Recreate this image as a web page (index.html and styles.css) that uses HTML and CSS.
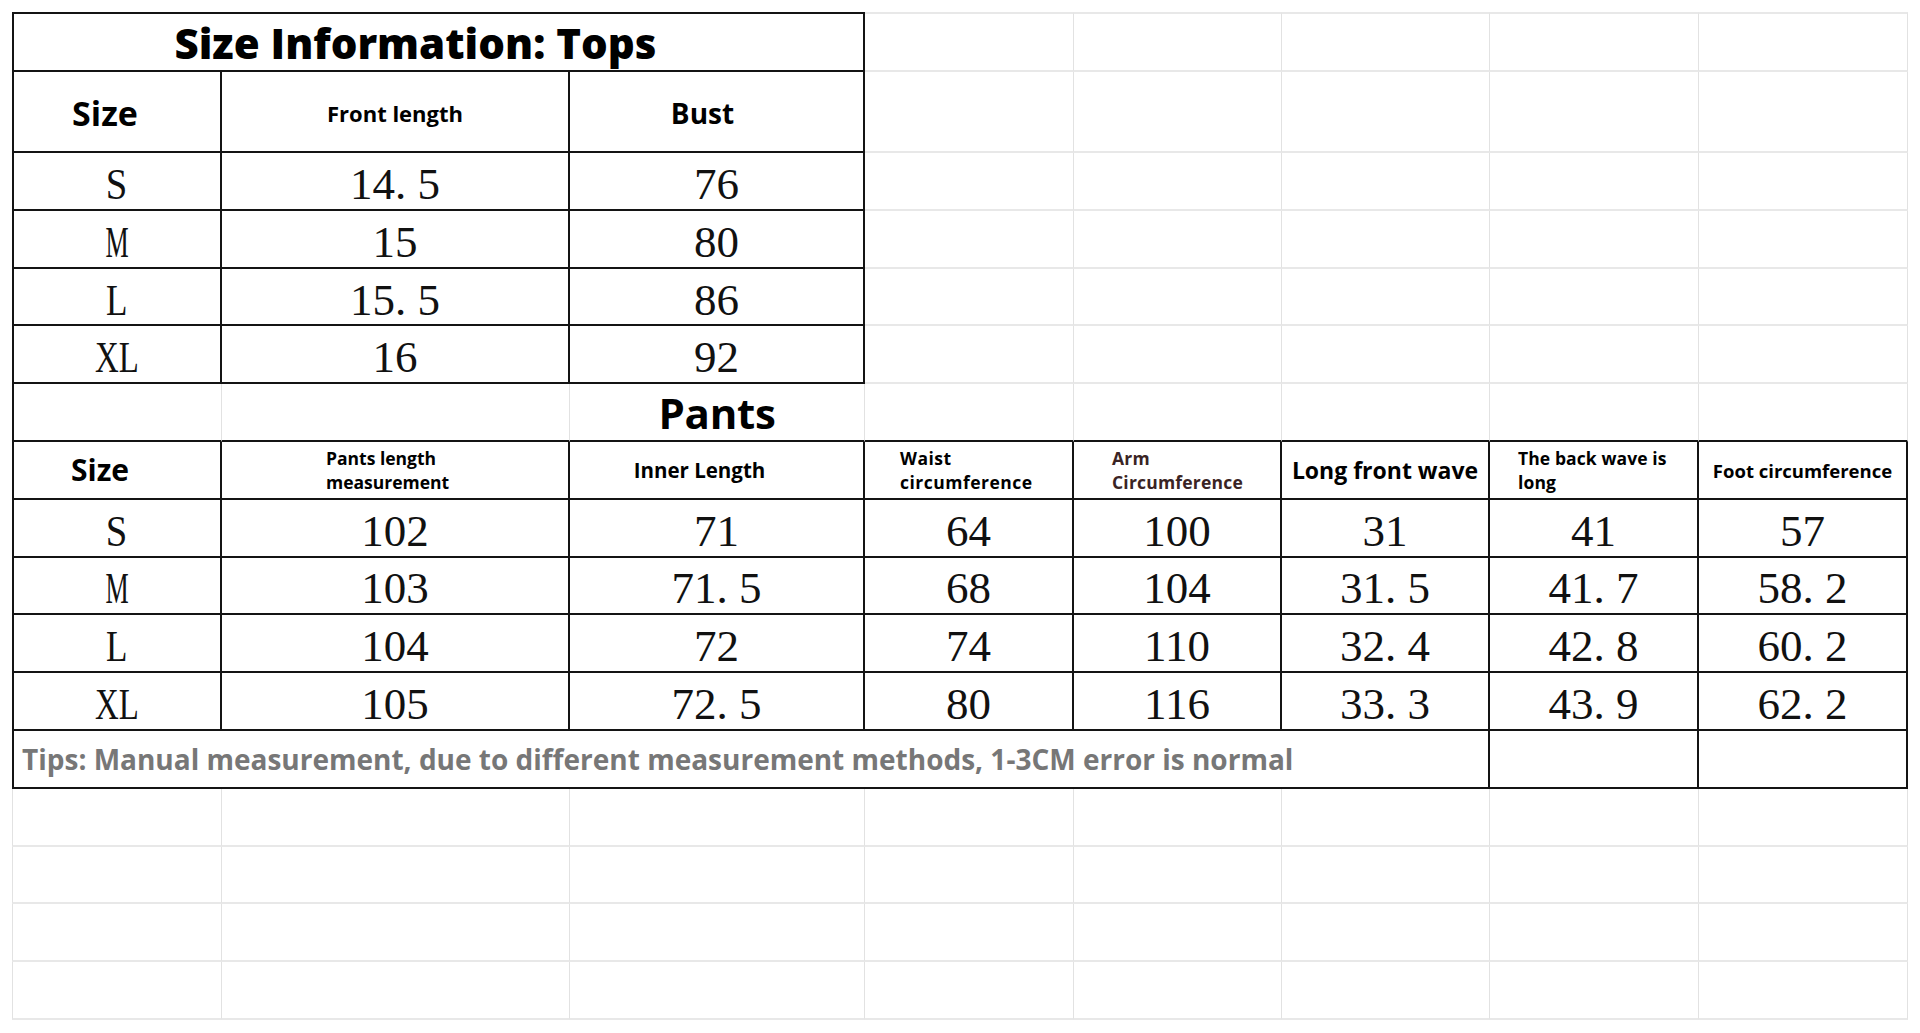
FILE: index.html
```html
<!DOCTYPE html>
<html lang="en">
<head>
<meta charset="utf-8">
<title>Size Information</title>
<link rel="stylesheet" href="styles.css">
</head>
<body>
<div class="sheet">
  <!-- row 0 -->
  <div class="cell k bl bt span3 title">Size Information: Tops</div>
  <div class="cell gt"></div><div class="cell gt"></div><div class="cell gt"></div><div class="cell gt"></div><div class="cell gt"></div>
  <!-- row 1 -->
  <div class="cell k bl hd hd-size">Size</div>
  <div class="cell k hd hd-front">Front length</div>
  <div class="cell k hd hd-bust">Bust</div>
  <div class="cell"></div><div class="cell"></div><div class="cell"></div><div class="cell"></div><div class="cell"></div>
  <!-- rows 2-5 -->
  <div class="cell k bl val"><span class="lt lt-s">S</span></div>
  <div class="cell k val">14. 5</div>
  <div class="cell k val">76</div>
  <div class="cell"></div><div class="cell"></div><div class="cell"></div><div class="cell"></div><div class="cell"></div>

  <div class="cell k bl val"><span class="lt lt-m">M</span></div>
  <div class="cell k val">15</div>
  <div class="cell k val">80</div>
  <div class="cell"></div><div class="cell"></div><div class="cell"></div><div class="cell"></div><div class="cell"></div>

  <div class="cell k bl val"><span class="lt lt-l">L</span></div>
  <div class="cell k val">15. 5</div>
  <div class="cell k val">86</div>
  <div class="cell"></div><div class="cell"></div><div class="cell"></div><div class="cell"></div><div class="cell"></div>

  <div class="cell k bl val"><span class="lt lt-xl">XL</span></div>
  <div class="cell k val">16</div>
  <div class="cell k val">92</div>
  <div class="cell"></div><div class="cell"></div><div class="cell"></div><div class="cell"></div><div class="cell"></div>

  <!-- row 6 -->
  <div class="cell bl kb"></div>
  <div class="cell kb"></div>
  <div class="cell kb pants">Pants</div>
  <div class="cell kb"></div><div class="cell kb"></div><div class="cell kb"></div><div class="cell kb"></div><div class="cell kb"></div>

  <!-- row 7 -->
  <div class="cell k bl hd hd-size2">Size</div>
  <div class="cell k hd two hd-pl">Pants length<br>measurement</div>
  <div class="cell k hd hd-inner">Inner Length</div>
  <div class="cell k hd two hd-waist">Waist<br>circumference</div>
  <div class="cell k hd two hd-arm">Arm<br>Circumference</div>
  <div class="cell k hd hd-long">Long front wave</div>
  <div class="cell k hd two hd-back">The back wave is<br>long</div>
  <div class="cell k hd hd-foot">Foot circumference</div>

  <!-- rows 8-11 -->
  <div class="cell k bl val"><span class="lt lt-s">S</span></div>
  <div class="cell k val">102</div>
  <div class="cell k val">71</div>
  <div class="cell k val">64</div>
  <div class="cell k val">100</div>
  <div class="cell k val">31</div>
  <div class="cell k val">41</div>
  <div class="cell k val">57</div>

  <div class="cell k bl val"><span class="lt lt-m">M</span></div>
  <div class="cell k val">103</div>
  <div class="cell k val">71. 5</div>
  <div class="cell k val">68</div>
  <div class="cell k val">104</div>
  <div class="cell k val">31. 5</div>
  <div class="cell k val">41. 7</div>
  <div class="cell k val">58. 2</div>

  <div class="cell k bl val"><span class="lt lt-l">L</span></div>
  <div class="cell k val">104</div>
  <div class="cell k val">72</div>
  <div class="cell k val">74</div>
  <div class="cell k val">110</div>
  <div class="cell k val">32. 4</div>
  <div class="cell k val">42. 8</div>
  <div class="cell k val">60. 2</div>

  <div class="cell k bl val"><span class="lt lt-xl">XL</span></div>
  <div class="cell k val">105</div>
  <div class="cell k val">72. 5</div>
  <div class="cell k val">80</div>
  <div class="cell k val">116</div>
  <div class="cell k val">33. 3</div>
  <div class="cell k val">43. 9</div>
  <div class="cell k val">62. 2</div>

  <!-- row 12 -->
  <div class="cell k bl span6 tips">Tips: Manual measurement, due to different measurement methods, 1-3CM error is normal</div>
  <div class="cell k"></div>
  <div class="cell k"></div>

  <!-- rows 13-16 -->
  <div class="cell gl"></div><div class="cell"></div><div class="cell"></div><div class="cell"></div><div class="cell"></div><div class="cell"></div><div class="cell"></div><div class="cell"></div>
  <div class="cell gl"></div><div class="cell"></div><div class="cell"></div><div class="cell"></div><div class="cell"></div><div class="cell"></div><div class="cell"></div><div class="cell"></div>
  <div class="cell gl"></div><div class="cell"></div><div class="cell"></div><div class="cell"></div><div class="cell"></div><div class="cell"></div><div class="cell"></div><div class="cell"></div>
  <div class="cell gl"></div><div class="cell"></div><div class="cell"></div><div class="cell"></div><div class="cell"></div><div class="cell"></div><div class="cell"></div><div class="cell"></div>
</div>
</body>
</html>
```

FILE: styles.css
```css
html, body {
  margin: 0;
  padding: 0;
  background: #ffffff;
}

body {
  font-family: "Open Sans", "Noto Sans", sans-serif;
  color: #000;
}

.sheet {
  display: grid;
  grid-template-columns: 210px 348px 295px 209px 208px 208px 209px 209px;
  grid-template-rows: 60px 81px repeat(15, 57.8px);
  margin: 12px 0 0 12px;
  width: 1896px;
}

.cell {
  box-sizing: border-box;
  border-right: 1px solid #e2e2e2;
  border-bottom: 2px solid #e8e8e8;
  display: flex;
  align-items: center;
  justify-content: center;
  overflow: visible;
  white-space: nowrap;
}

.k {
  border-right: 2px solid #141414;
  border-bottom: 2px solid #141414;
}

.kb {
  border-bottom: 2px solid #141414;
}

.bl {
  border-left: 2px solid #141414;
}

.bt {
  border-top: 2px solid #141414;
}

.gt {
  border-top: 2px solid #e8e8e8;
}

.gl {
  border-left: 1px solid #e2e2e2;
}

.span3 {
  grid-column: span 3;
}

.span6 {
  grid-column: span 6;
}

.title {
  font-size: 42px;
  font-weight: 800;
  padding-right: 46px;
  letter-spacing: 0;
}

.pants {
  font-size: 42px;
  font-weight: 700;
  letter-spacing: -0.3px;
}

.hd {
  font-weight: 700;
  color: #000;
}

.hd-size {
  font-size: 34px;
  padding-right: 24px;
  padding-top: 2px;
}

.hd-size2 {
  font-size: 30px;
  padding-right: 34px;
}

.hd-front {
  font-size: 22px;
  padding-top: 2px;
}

.hd-bust {
  font-size: 28px;
  padding-right: 28px;
  padding-top: 2px;
}

.two {
  justify-content: flex-start;
  line-height: 24px;
  white-space: nowrap;
}

.hd-pl {
  font-size: 17.5px;
  padding-left: 104px;
}

.hd-inner {
  font-size: 20.5px;
  padding-right: 34px;
}

.hd-waist {
  font-size: 17.5px;
  letter-spacing: 0.5px;
  padding-left: 35px;
}

.hd-arm {
  font-size: 17.5px;
  letter-spacing: 0.2px;
  padding-left: 38px;
  color: #3a2424;
}

.hd-long {
  font-size: 23px;
}

.hd-back {
  font-size: 17.5px;
  letter-spacing: 0.1px;
  padding-left: 28px;
}

.hd-foot {
  font-size: 18.5px;
  padding-top: 2px;
}

.val {
  font-family: "Liberation Serif", "Times New Roman", serif;
  font-size: 45px;
  color: #111;
  padding-top: 6px;
  white-space: pre;
}

.lt {
  display: inline-block;
}

.lt-s {
  transform: scaleX(0.86);
}

.lt-m {
  transform: scaleX(0.58);
}

.lt-l {
  transform: scaleX(0.78);
}

.lt-xl {
  transform: scaleX(0.73);
}

.tips {
  justify-content: flex-start;
  padding-left: 8px;
  font-size: 28px;
  font-weight: 700;
  color: #777777;
  letter-spacing: 0;
}
```
